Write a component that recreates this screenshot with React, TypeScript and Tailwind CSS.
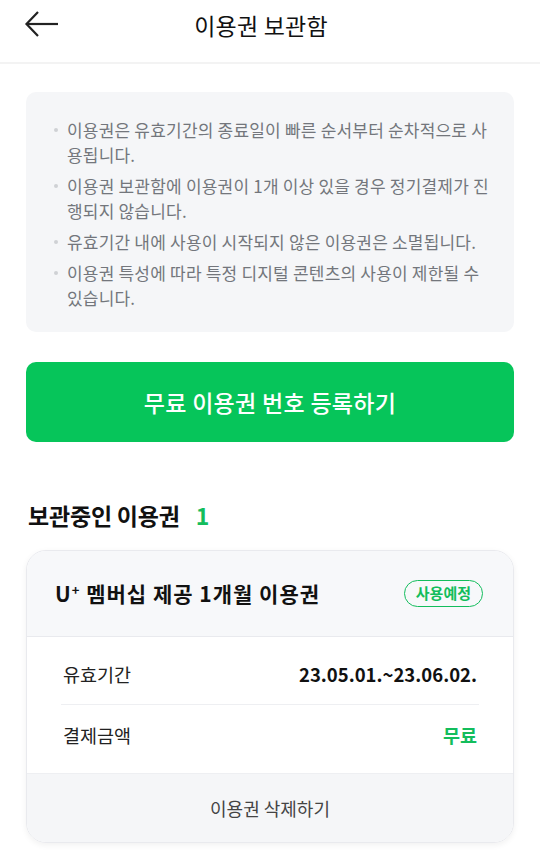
import React from 'react'

const notices = [
    '이용권은 유효기간의 종료일이 빠른 순서부터 순차적으로 사용됩니다.',
    '이용권 보관함에 이용권이 1개 이상 있을 경우 정기결제가 진행되지 않습니다.',
    '유효기간 내에 사용이 시작되지 않은 이용권은 소멸됩니다.',
    '이용권 특성에 따라 특정 디지털 콘텐츠의 사용이 제한될 수 있습니다.',
]

export default function App() {
    return (
        <div className="w-[540px] min-h-[851px] bg-white font-['Noto_Sans_CJK_KR',sans-serif] text-[#111]">
            <header className="relative h-[64px] border-b-2 border-[#f3f3f3] flex justify-center pt-[9px] pr-[18px]">
                <button className="absolute left-[24px] top-[10px]">
                    <svg width="36" height="28" viewBox="0 0 36 28" fill="none" stroke="#222" strokeWidth="2.2">
                        <path d="M34 14H3" />
                        <path d="M14 2L2.5 14L14 26" />
                    </svg>
                </button>
                <h1 className="text-[23px] leading-[32px] tracking-[0.2px]">이용권 보관함</h1>
            </header>

            <section className="mx-[26px] mt-[28px] rounded-[10px] bg-[#f5f6f8] pl-[28px] pr-[22px] pt-[25px] pb-[22px]">
                <ul className="space-y-[6px]">
                    {notices.map((n) => (
                        <li key={n} className="flex text-[17px] leading-[25px] tracking-[0.2px] text-[#73767c] break-all">
                            <span className="mt-[11px] mr-[9px] h-[4px] w-[4px] shrink-0 rounded-full bg-[#cfd1d5]" />
                            <span>{n}</span>
                        </li>
                    ))}
                </ul>
            </section>

            <button className="mx-[26px] mt-[30px] flex h-[80px] w-[488px] items-center justify-center rounded-[10px] bg-[#06c55a] text-[23px] font-medium tracking-[0.3px] text-white">
                무료 이용권 번호 등록하기
            </button>

            <h2 className="mx-[28px] mt-[58px] flex items-center gap-[16px] text-[23px] font-bold leading-[30px] tracking-[-0.2px]">
                보관중인 이용권 <span className="text-[#13bd5c]">1</span>
            </h2>

            <div className="mx-[26px] mt-[20px] overflow-hidden rounded-[20px] border border-[#e9eaee] shadow-[0_2px_6px_rgba(0,0,0,0.06)]">
                <div className="flex h-[86px] items-center justify-between border-b border-[#e9eaee] bg-[#f7f8fa] pl-[28px] pr-[30px]">
                    <span className="text-[21px] font-bold tracking-[1px]">
                        U<sup className="text-[13px]">+</sup> 멤버십 제공 1개월 이용권
                    </span>
                    <span className="flex h-[27px] items-center rounded-full border-[1.5px] border-[#13bd5c] px-[11px] text-[15px] font-bold text-[#13bd5c]">
                        사용예정
                    </span>
                </div>
                <div className="bg-white px-[34px] pt-[8px] pb-[6px]">
                    <div className="flex h-[60px] items-center justify-between border-b border-[#eeeff2] px-[2px] text-[18.5px]">
                        <span className="text-[#222]">유효기간</span>
                        <span className="font-bold">23.05.01.~23.06.02.</span>
                    </div>
                    <div className="flex h-[62px] items-center justify-between px-[2px] text-[18.5px]">
                        <span className="text-[#222]">결제금액</span>
                        <span className="font-bold text-[#13bd5c]">무료</span>
                    </div>
                </div>
                <div className="flex h-[69px] items-center justify-center border-t border-[#eeeff2] bg-[#f5f6f8] text-[18px] text-[#444]">
                    이용권 삭제하기
                </div>
            </div>
        </div>
    )
}
